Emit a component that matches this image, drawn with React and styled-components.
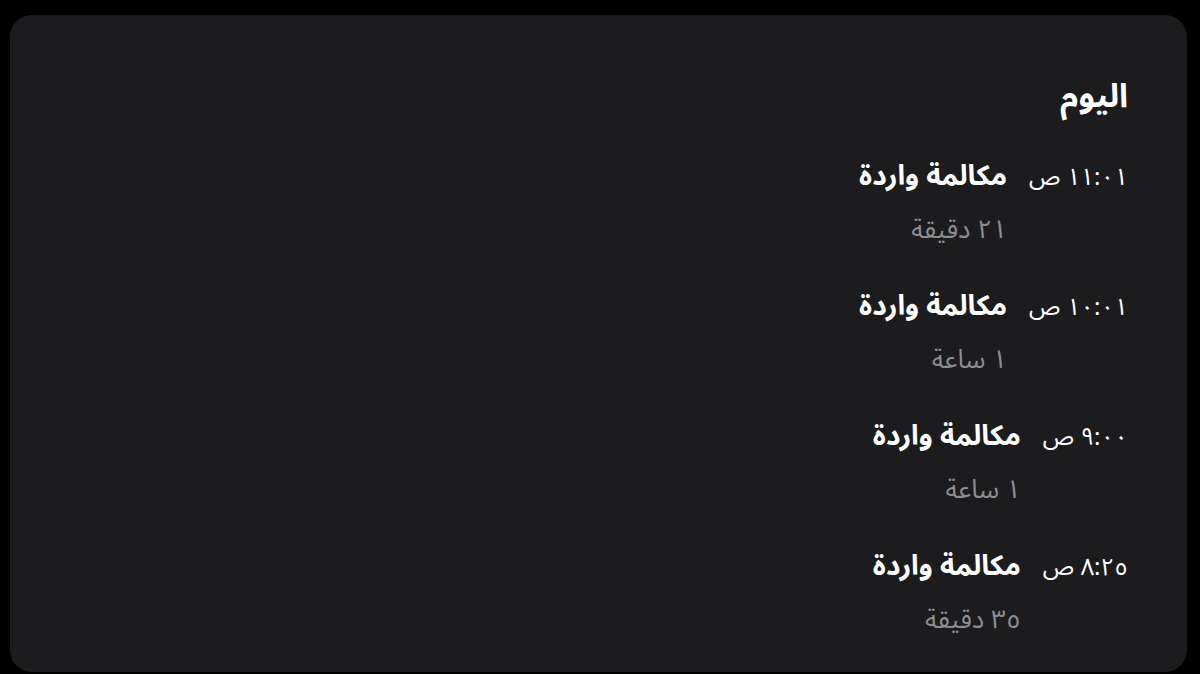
import React from "react";
import styled, { createGlobalStyle } from "styled-components";

const Global = createGlobalStyle`
  html, body { margin: 0; padding: 0; background: #000; }
  body { font-family: "Noto Sans Arabic", "DejaVu Sans", sans-serif; }
`;

const Page = styled.div`
  width: 1200px;
  height: 674px;
  box-sizing: border-box;
  padding: 15px 13px 2px 10px;
  background: #000;
  display: flex;
`;

const Card = styled.section`
  flex: 1;
  background: #1c1c1e;
  border-radius: 22px;
  direction: rtl;
  padding: 63px 59px 0 59px;
  display: flex;
  flex-direction: column;
  align-items: flex-start;
  color: #fff;
`;

const Heading = styled.h2`
  margin: 0 0 36px 0;
  font-size: 33px;
  font-weight: 700;
  line-height: 37px;
`;

const List = styled.div`
  display: flex;
  flex-direction: column;
  gap: 24px;
`;

const Row = styled.div`
  display: flex;
  align-items: baseline;
  gap: 22px;
`;

const Time = styled.span`
  font-size: 24px;
  line-height: 52px;
  font-weight: 400;
  white-space: nowrap;
`;

const Details = styled.div`
  display: flex;
  flex-direction: column;
  align-items: flex-start;
`;

const Title = styled.span`
  font-size: 28px;
  line-height: 52px;
  font-weight: 700;
`;

const Duration = styled.span`
  font-size: 26px;
  line-height: 54px;
  color: #8d8d92;
`;

const calls = [
  { time: "١١:٠١ ص", duration: "٢١ دقيقة" },
  { time: "١٠:٠١ ص", duration: "١ ساعة" },
  { time: "٩:٠٠ ص", duration: "١ ساعة" },
  { time: "٨:٢٥ ص", duration: "٣٥ دقيقة" },
];

export default function App() {
  return (
    <>
      <Global />
      <Page>
        <Card>
          <Heading>اليوم</Heading>
          <List>
            {calls.map((c) => (
              <Row key={c.time}>
                <Time>{c.time}</Time>
                <Details>
                  <Title>مكالمة واردة</Title>
                  <Duration>{c.duration}</Duration>
                </Details>
              </Row>
            ))}
          </List>
        </Card>
      </Page>
    </>
  );
}
